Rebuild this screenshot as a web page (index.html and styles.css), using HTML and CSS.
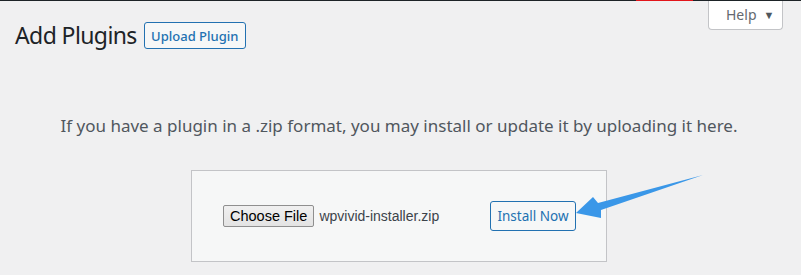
FILE: index.html
```html
<!DOCTYPE html>
<html lang="en">
  <head>
    <meta charset="UTF-8" />
    <title>Add Plugins</title>
    <link rel="stylesheet" href="styles.css">
  </head>
  <body>
    <div class="adminbar"><span class="adminbar-active"></span></div>

    <div class="screen-meta-links">
      <button class="help-tab">Help <span class="help-caret">&#9660;</span></button>
    </div>

    <div class="wrap">
      <div class="page-header">
        <h1 class="page-title">Add Plugins</h1>
        <a class="btn-outline upload-toggle">Upload Plugin</a>
      </div>

      <div class="upload-plugin">
        <p class="install-help">
          If you have a plugin in a .zip format, you may install or update it by uploading it here.
        </p>

        <div class="upload-form-wrap">
          <form class="upload-form">
            <span class="file-picker">
              <span class="file-btn">Choose File</span>
              <span class="file-name">wpvivid-installer.zip</span>
            </span>
            <button type="button" class="btn-outline btn-install">Install Now</button>
          </form>

          <!-- annotation arrow pointing at the install button -->
          <svg class="pointer-arrow" width="140" height="60" viewBox="0 0 140 60">
            <polygon points="0,39 17,23 22,29 127,1 25,36 25,44" fill="#3a97e8" />
          </svg>
        </div>
      </div>
    </div>
  </body>
</html>
```

FILE: styles.css
```css
:root {
  --bg: #f0f0f1;
  --panel: #f6f7f7;
  --border: #c3c4c7;
  --text: #1d2327;
  --muted: #50575e;
  --blue: #2271b1;
}

* {
  box-sizing: border-box;
}

body {
  margin: 0;
  background: var(--bg);
  color: var(--text);
  font-family: "Noto Sans", "Open Sans", sans-serif;
}

.adminbar {
  height: 1px;
  background: #1d2327;
  display: flex;
}

.adminbar-active {
  margin-left: 636px;
  width: 57px;
  background: #e2151b;
}

.screen-meta-links {
  float: right;
  margin-right: 18px;
}

.help-tab {
  width: 75px;
  height: 29px;
  padding: 0 0 2px 17px;
  display: flex;
  align-items: center;
  gap: 7px;
  background: #fff;
  border: 1px solid var(--border);
  border-top: none;
  border-radius: 0 0 4px 4px;
  color: #646970;
  font-family: inherit;
  font-size: 14px;
}

.help-caret {
  font-size: 11px;
  color: #50575e;
}

.wrap {
  padding: 21px 3px 0 0;
}

.page-header {
  display: flex;
  align-items: center;
  gap: 7px;
  padding-left: 15px;
}

.page-title {
  margin: 0;
  font-size: 23px;
  font-weight: 400;
  letter-spacing: -0.6px;
  line-height: 27px;
}

.btn-outline {
  display: inline-flex;
  align-items: center;
  justify-content: center;
  border: 1px solid var(--blue);
  border-radius: 3px;
  background: var(--panel);
  color: var(--blue);
  font-family: inherit;
  font-size: 13px;
  cursor: pointer;
}

.upload-toggle {
  width: 102px;
  height: 27px;
  font-weight: 500;
}

.upload-plugin {
  text-align: center;
}

.install-help {
  margin: 0;
  padding: 66px 0 33px;
  font-size: 17px;
  line-height: 22px;
  color: var(--muted);
}

.upload-form-wrap {
  position: relative;
  display: inline-block;
}

.upload-form {
  width: 416px;
  padding: 30px 30px 30px 31px;
  display: flex;
  align-items: center;
  background: var(--panel);
  border: 1px solid var(--border);
}

.file-picker {
  display: flex;
  align-items: center;
  gap: 5px;
  font-family: "Liberation Sans", Arial, sans-serif;
  font-size: 14px;
}

.file-btn {
  height: 22px;
  padding: 0 6px;
  display: flex;
  align-items: center;
  background: linear-gradient(#f0f0f0, #e3e3e3);
  border: 1px solid #8f8f8f;
  border-radius: 2px;
  color: #000;
  font-size: 14.5px;
}

.file-name {
  color: #3c434a;
}

.btn-install {
  margin-left: auto;
  width: 86px;
  height: 30px;
  font-size: 13.5px;
}

.pointer-arrow {
  position: absolute;
  left: 385px;
  top: 4px;
}
```
